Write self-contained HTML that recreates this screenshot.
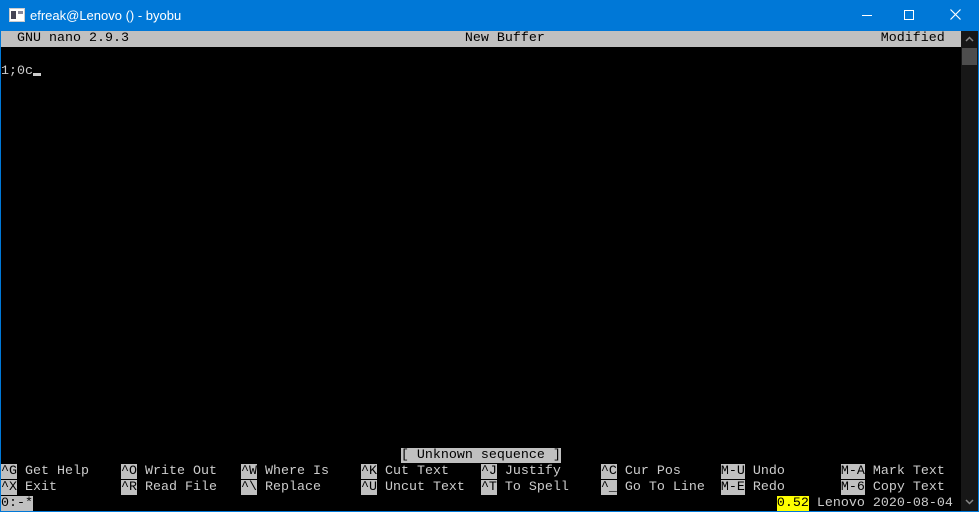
<html><head><style>
body{margin:0;width:979px;height:512px;background:#0078d7;overflow:hidden;position:relative;font-family:"Liberation Mono",monospace}
.tb{position:absolute;left:0;top:0;width:979px;height:31px;background:#0078d7;color:#fff;font:13px "Liberation Sans",sans-serif}
.term{position:absolute;left:1px;top:31px;width:960px;height:480px;background:#000}
.sb{position:absolute;left:961px;top:31px;width:17px;height:480px;background:#171717}
.r{position:absolute;left:0;height:16px;line-height:16px;font-size:13.33px;color:#cccccc;white-space:pre}
.h{background:#c0c0c0;color:#000}
</style></head><body>
<div class="tb">
<svg style="position:absolute;left:9px;top:8px" width="16" height="14"><rect x="0.5" y="0.5" width="15" height="13" fill="#fff" stroke="#ccc"/><rect x="2" y="3" width="5" height="8" fill="#445"/><rect x="9" y="3" width="5" height="3" fill="#889"/></svg>
<span style="position:absolute;left:30px;top:8px">efreak@Lenovo () - byobu</span>
<div style="position:absolute;left:862px;top:15px;width:10px;height:1px;background:#fff"></div>
<div style="position:absolute;left:904px;top:10px;width:8px;height:8px;border:1px solid #fff"></div>
<svg style="position:absolute;left:950px;top:9px" width="11" height="11"><path d="M0.5 0.5L10.5 10.5M10.5 0.5L0.5 10.5" stroke="#fff" stroke-width="1.2"/></svg>
</div>
<div class="term">
<div class="r h" style="top:0;width:960px">  GNU nano 2.9.3                                          New Buffer                                          Modified  </div>
<div class="r" style="top:33px">1;0c<span style="display:inline-block;width:8px;height:3px;background:#ccc;vertical-align:-2px"></span></div>
<div class="r" style="top:417px">                                                  <span class="h">[ Unknown sequence ]</span></div>
<div class="r" style="top:433px"><span class="h">^G</span> Get Help    <span class="h">^O</span> Write Out   <span class="h">^W</span> Where Is    <span class="h">^K</span> Cut Text    <span class="h">^J</span> Justify     <span class="h">^C</span> Cur Pos     <span class="h">M-U</span> Undo       <span class="h">M-A</span> Mark Text</div>
<div class="r" style="top:449px"><span class="h">^X</span> Exit        <span class="h">^R</span> Read File   <span class="h">^\</span> Replace     <span class="h">^U</span> Uncut Text  <span class="h">^T</span> To Spell    <span class="h">^_</span> Go To Line  <span class="h">M-E</span> Redo       <span class="h">M-6</span> Copy Text</div>
<div class="r" style="top:465px"><span class="h">0:-*</span>                                                                                             <span style="background:#ffff00;color:#000">0.52</span> Lenovo 2020-08-04</div>
</div>
<div class="sb">
<svg style="position:absolute;left:4px;top:5px" width="9" height="6"><path d="M1 5L4.5 1.5L8 5" stroke="#888" fill="none" stroke-width="1.5"/></svg>
<div style="position:absolute;left:1px;top:17px;width:15px;height:17px;background:#4d4d4d"></div>
<svg style="position:absolute;left:4px;top:468px" width="9" height="6"><path d="M1 1L4.5 4.5L8 1" stroke="#888" fill="none" stroke-width="1.5"/></svg>
</div>
</body></html>
